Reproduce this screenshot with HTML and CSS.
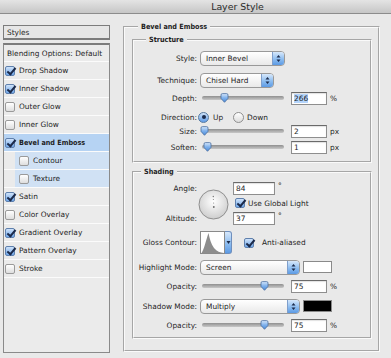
FILE: index.html
```html
<!DOCTYPE html>
<html lang="en">
<head>
    <meta charset="UTF-8">
    <title>Layer Style</title>
    <link rel="stylesheet" href="styles.css">
</head>
<body>

<svg class="defs" width="0" height="0">
    <defs>
        <linearGradient id="thumbGrad" x1="0" y1="0" x2="0" y2="1">
            <stop offset="0" stop-color="#d6e7fb"/>
            <stop offset="0.5" stop-color="#7fb1ec"/>
            <stop offset="1" stop-color="#4a8ad9"/>
        </linearGradient>
        <radialGradient id="dialGrad" cx="50%" cy="40%" r="60%">
            <stop offset="0" stop-color="#ffffff"/>
            <stop offset="1" stop-color="#cdcdcd"/>
        </radialGradient>
    </defs>
</svg>

<div class="titlebar">Layer Style</div>

<div class="main">
    <div class="sidebar">
        <div class="styles-box">Styles</div>
        <ul class="effects">
            <li class="blend">Blending Options: Default</li>
            <li><span class="cb on"></span>Drop Shadow</li>
            <li><span class="cb on"></span>Inner Shadow</li>
            <li><span class="cb"></span>Outer Glow</li>
            <li><span class="cb"></span>Inner Glow</li>
            <li class="active"><span class="cb on"></span><b>Bevel and Emboss</b></li>
            <li class="sub"><span class="cb"></span>Contour</li>
            <li class="sub"><span class="cb"></span>Texture</li>
            <li><span class="cb on"></span>Satin</li>
            <li><span class="cb"></span>Color Overlay</li>
            <li><span class="cb on"></span>Gradient Overlay</li>
            <li><span class="cb on"></span>Pattern Overlay</li>
            <li><span class="cb"></span>Stroke</li>
        </ul>
    </div>

    <fieldset class="group">
        <legend>Bevel and Emboss</legend>

        <fieldset class="box structure">
            <legend>Structure</legend>

            <div class="row">
                <span class="lbl">Style:</span>
                <span class="select w-style"><span class="val">Inner Bevel</span><span class="arrows"><svg width="11" height="13" viewBox="0 0 11 13"><path d="M3.5 5.5 L5.5 3 L7.5 5.5 Z M3.5 7.5 L5.5 10 L7.5 7.5 Z" fill="#1c2b4b"/></svg></span></span>
            </div>
            <div class="row r-technique">
                <span class="lbl">Technique:</span>
                <span class="select w-technique"><span class="val">Chisel Hard</span><span class="arrows"><svg width="11" height="13" viewBox="0 0 11 13"><path d="M3.5 5.5 L5.5 3 L7.5 5.5 Z M3.5 7.5 L5.5 10 L7.5 7.5 Z" fill="#1c2b4b"/></svg></span></span>
            </div>
            <div class="row r-depth">
                <span class="lbl">Depth:</span>
                <span class="slider"><svg class="thumb" style="left:20px" width="9" height="10" viewBox="0 0 9 10"><path d="M1 2 Q1 .6 2.4 .6 H6.6 Q8 .6 8 2 V5.4 L4.5 9.3 L1 5.4 Z" fill="url(#thumbGrad)" stroke="#4b6f9f" stroke-width=".8"/></svg></span>
                <span class="field"><span class="selected">266</span></span>
                <span class="unit">%</span>
            </div>
            <div class="row r-direction">
                <span class="lbl">Direction:</span>
                <span class="radio on"></span><span class="opt">Up</span>
                <span class="radio"></span><span class="opt">Down</span>
            </div>
            <div class="row r-size">
                <span class="lbl">Size:</span>
                <span class="slider"><svg class="thumb" style="left:0px" width="9" height="10" viewBox="0 0 9 10"><path d="M1 2 Q1 .6 2.4 .6 H6.6 Q8 .6 8 2 V5.4 L4.5 9.3 L1 5.4 Z" fill="url(#thumbGrad)" stroke="#4b6f9f" stroke-width=".8"/></svg></span>
                <span class="field">2</span>
                <span class="unit">px</span>
            </div>
            <div class="row r-soften">
                <span class="lbl">Soften:</span>
                <span class="slider"><svg class="thumb" style="left:3px" width="9" height="10" viewBox="0 0 9 10"><path d="M1 2 Q1 .6 2.4 .6 H6.6 Q8 .6 8 2 V5.4 L4.5 9.3 L1 5.4 Z" fill="url(#thumbGrad)" stroke="#4b6f9f" stroke-width=".8"/></svg></span>
                <span class="field">1</span>
                <span class="unit">px</span>
            </div>
        </fieldset>

        <fieldset class="box shading">
            <legend>Shading</legend>

            <div class="angle-block">
                <span class="lbl angle-lbl">Angle:</span>
                <svg class="dial" width="31" height="31" viewBox="0 0 31 31">
                    <circle cx="15.5" cy="15.5" r="14.5" fill="url(#dialGrad)" stroke="#8f8f8f"/>
                    <circle cx="15.8" cy="18" r="0.9" fill="#6a6a6a"/>
                    <circle cx="15.6" cy="14" r="0.6" fill="#8a8a8a"/>
                    <circle cx="15.4" cy="10.5" r="0.6" fill="#8a8a8a"/>
                    <circle cx="15.3" cy="7.5" r="0.7" fill="#777"/>
                </svg>
                <span class="field wide angle-val">84</span>
                <span class="unit deg angle-deg">°</span>
                <span class="check global"><span class="cb on"></span>Use Global Light</span>
                <span class="lbl alt-lbl">Altitude:</span>
                <span class="field wide alt-val">37</span>
                <span class="unit deg alt-deg">°</span>
            </div>

            <div class="row r-gloss">
                <span class="lbl">Gloss Contour:</span>
                <span class="contour">
                    <svg width="25" height="23" viewBox="0 0 25 23">
                        <rect x=".5" y=".5" width="24" height="22" fill="#fff" stroke="#8a8a8a"/>
                        <path d="M1.5 22 C4 19 6 9 8.5 2 C9.5 7 11 13 14 17 C17 20.5 20 21.5 24 22 Z" fill="#8d8d8d"/>
                    </svg>
                    <span class="drop"><svg width="7" height="23" viewBox="0 0 7 23"><path d="M1.5 10 H5.5 L3.5 13 Z" fill="#1c2b4b"/></svg></span>
                </span>
                <span class="check anti"><span class="cb on"></span>Anti-aliased</span>
            </div>
            <div class="row r-mode">
                <span class="lbl">Highlight Mode:</span>
                <span class="select w-mode"><span class="val">Screen</span><span class="arrows"><svg width="11" height="13" viewBox="0 0 11 13"><path d="M3.5 5.5 L5.5 3 L7.5 5.5 Z M3.5 7.5 L5.5 10 L7.5 7.5 Z" fill="#1c2b4b"/></svg></span></span>
                <span class="swatch white"></span>
            </div>
            <div class="row r-opacity">
                <span class="lbl">Opacity:</span>
                <span class="slider"><svg class="thumb" style="left:60px" width="9" height="10" viewBox="0 0 9 10"><path d="M1 2 Q1 .6 2.4 .6 H6.6 Q8 .6 8 2 V5.4 L4.5 9.3 L1 5.4 Z" fill="url(#thumbGrad)" stroke="#4b6f9f" stroke-width=".8"/></svg></span>
                <span class="field">75</span>
                <span class="unit">%</span>
            </div>
            <div class="row r-mode">
                <span class="lbl">Shadow Mode:</span>
                <span class="select w-mode"><span class="val">Multiply</span><span class="arrows"><svg width="11" height="13" viewBox="0 0 11 13"><path d="M3.5 5.5 L5.5 3 L7.5 5.5 Z M3.5 7.5 L5.5 10 L7.5 7.5 Z" fill="#1c2b4b"/></svg></span></span>
                <span class="swatch black"></span>
            </div>
            <div class="row r-opacity">
                <span class="lbl">Opacity:</span>
                <span class="slider"><svg class="thumb" style="left:60px" width="9" height="10" viewBox="0 0 9 10"><path d="M1 2 Q1 .6 2.4 .6 H6.6 Q8 .6 8 2 V5.4 L4.5 9.3 L1 5.4 Z" fill="url(#thumbGrad)" stroke="#4b6f9f" stroke-width=".8"/></svg></span>
                <span class="field">75</span>
                <span class="unit">%</span>
            </div>
        </fieldset>
    </fieldset>
</div>

</body>
</html>
```

FILE: styles.css
```css
* {
    box-sizing: border-box;
}
body {
    margin: 0;
    width: 391px;
    height: 358px;
    overflow: hidden;
    background: #e9e9e9;
    font-family: "DejaVu Sans", Verdana, sans-serif;
    font-size: 7.4px;
    color: #1e1e1e;
}
.defs {
    position: absolute;
}
.titlebar {
    height: 14px;
    padding-left: 84px;
    text-align: center;
    font-size: 9.4px;
    line-height: 13px;
    color: #2a2a2a;
    background: linear-gradient(#e4e4e4, #c6c6c6);
    border-bottom: 1px solid #8c8c8c;
}
.main {
    display: flex;
    align-items: flex-start;
}

/* left column */
.sidebar {
    width: 107px;
    margin: 11px 0 0 3px;
}
.styles-box {
    height: 15px;
    padding-left: 3px;
    line-height: 13px;
    background: #e6e6e6;
    border: 1px solid #7c7c7c;
    border-bottom-width: 2px;
}
.effects {
    list-style: none;
    margin: 3px 0 0;
    padding: 0;
    height: 310px;
    background: #ebebeb;
    border: 1px solid #8a8a8a;
    border-top: 2px solid #7c7c7c;
}
.effects li {
    display: flex;
    align-items: center;
    gap: 4px;
    height: 18px;
    padding-left: 1px;
    border-bottom: 1px solid #fbfbfb;
}
.effects li.blend {
    padding-left: 3px;
    height: 17px;
}
.effects li.active {
    background: #b6d3f3;
}
.effects li.sub {
    padding-left: 15px;
    background: linear-gradient(to right, transparent 11px, #d0e1f4 11px);
}
.effects b {
    font-family: "DejaVu Sans Condensed", "DejaVu Sans", sans-serif;
    font-size: 7.2px;
}

/* checkboxes and radios */
.cb {
    position: relative;
    flex: none;
    width: 10px;
    height: 10px;
    border: 1px solid #9a9a9a;
    border-radius: 2px;
    background: linear-gradient(#ffffff, #dedede);
}
.cb.on {
    border-color: #5f80ad;
    background: linear-gradient(#cfe3fa, #6fa7ea);
}
.cb.on::after {
    content: "";
    position: absolute;
    left: 3px;
    top: -1px;
    width: 3px;
    height: 7px;
    border: solid #1b2a4a;
    border-width: 0 2px 2px 0;
    transform: rotate(40deg);
}
.radio {
    position: relative;
    flex: none;
    width: 11px;
    height: 11px;
    border-radius: 50%;
    border: 1px solid #8f8f8f;
    background: linear-gradient(#ffffff, #dcdcdc);
}
.radio.on {
    border-color: #56799f;
    background: linear-gradient(#cfe3fa, #5f9be6);
}
.radio.on::after {
    content: "";
    position: absolute;
    left: 2.5px;
    top: 2.5px;
    width: 4px;
    height: 4px;
    border-radius: 50%;
    background: #1b2a4a;
}

/* right side groups */
fieldset {
    margin: 0;
    padding: 0;
    min-width: 0;
    border: 2px groove #fafafa;
}
legend {
    font-family: "DejaVu Sans Condensed", "DejaVu Sans", sans-serif;
    font-weight: bold;
    font-size: 7.2px;
    line-height: 10px;
    padding: 0 3px;
}
.group {
    width: 257px;
    margin: 8px 0 0 13px;
    padding: 3px 6px 11px 7px;
}
.group > legend {
    margin-left: 6px;
}
.box {
    padding: 6px 0 7px;
}
.structure > legend {
    margin-left: 12px;
}
.shading {
    margin-top: 4px;
    padding: 4px 0 5px;
}
.shading > legend {
    margin-left: 7px;
}

.row {
    display: flex;
    align-items: center;
    height: 14px;
}
.r-technique { margin-top: 8px; }
.r-depth { margin-top: 4px; }
.r-direction { margin-top: 5px; }
.r-soften { margin-top: 2px; }
.r-gloss { margin-top: 6px; height: 23px; }
.r-mode { margin-top: 6px; }
.r-opacity { margin-top: 5px; }

.lbl {
    flex: none;
    width: 63px;
    margin-right: 3px;
    text-align: right;
    white-space: nowrap;
}

/* popup menus */
.select {
    display: flex;
    flex: none;
    height: 15px;
    border: 1px solid #999;
    border-radius: 4px;
    background: linear-gradient(#ffffff, #e9e9e9);
    overflow: hidden;
}
.select .val {
    flex: 1;
    padding-left: 5px;
    line-height: 13px;
}
.select .arrows {
    flex: none;
    width: 12px;
    border-left: 1px solid #7f9fcc;
    background: linear-gradient(#d7e8fb, #8dbdf0 55%, #5c9ae4);
}
.select .arrows svg {
    display: block;
}
.w-style { width: 85px; }
.w-technique { width: 74px; }
.w-mode { width: 100px; }

/* sliders and fields */
.slider {
    position: relative;
    flex: none;
    width: 86px;
    height: 14px;
}
.slider::before {
    content: "";
    position: absolute;
    left: 2px;
    right: 2px;
    top: 5px;
    height: 4px;
    border-radius: 2px;
    background: linear-gradient(#8f8f8f, #c8c8c8);
}
.thumb {
    position: absolute;
    top: 2px;
}
.field {
    flex: none;
    width: 36px;
    height: 13px;
    margin-left: 5px;
    padding-left: 2px;
    line-height: 11px;
    background: #fff;
    border: 1px solid #8e8e8e;
    border-top-color: #6a6a6a;
    box-shadow: inset 0 1px 1px rgba(0, 0, 0, 0.12);
}
.field .selected {
    background: #b4d4fb;
}
.unit {
    margin-left: 3px;
}
.opt {
    margin: 0 10px 0 4px;
}
.r-direction .radio.on {
    margin-left: -2px;
}
.r-direction .opt + .radio + .opt {
    margin-left: 3px;
}

/* angle */
.angle-block {
    display: grid;
    grid-template-columns: 64px 35px 42px auto;
    grid-template-rows: 14px 16px 14px;
    align-items: center;
}
.angle-lbl { grid-row: 1; grid-column: 1; }
.alt-lbl { grid-row: 3; grid-column: 1; }
.dial {
    grid-row: 1 / 4;
    grid-column: 2;
    margin-top: 3px;
}
.field.wide {
    width: 42px;
    margin-left: 0;
}
.angle-val { grid-row: 1; grid-column: 3; }
.alt-val { grid-row: 3; grid-column: 3; }
.angle-deg { grid-row: 1; grid-column: 4; align-self: start; }
.alt-deg { grid-row: 3; grid-column: 4; align-self: start; }
.check {
    display: flex;
    align-items: center;
    gap: 3px;
    white-space: nowrap;
}
.global {
    grid-row: 2;
    grid-column: 3 / 5;
    margin-left: 2px;
}

/* gloss contour */
.contour {
    display: flex;
    flex: none;
}
.contour svg {
    display: block;
}
.contour .drop {
    width: 7px;
    height: 23px;
    border: 1px solid #6f8fbd;
    border-left: 0;
    border-radius: 0 3px 3px 0;
    background: linear-gradient(#d7e8fb, #8dbdf0 55%, #5c9ae4);
}
.contour .drop svg {
    margin-top: -1px;
}
.anti {
    margin-left: 12px;
    gap: 8px;
}

.swatch {
    flex: none;
    width: 29px;
    height: 12px;
    margin-left: 3px;
    border: 1px solid #8a8a8a;
}
.swatch.white { background: #fff; }
.swatch.black { background: #000; }
```
